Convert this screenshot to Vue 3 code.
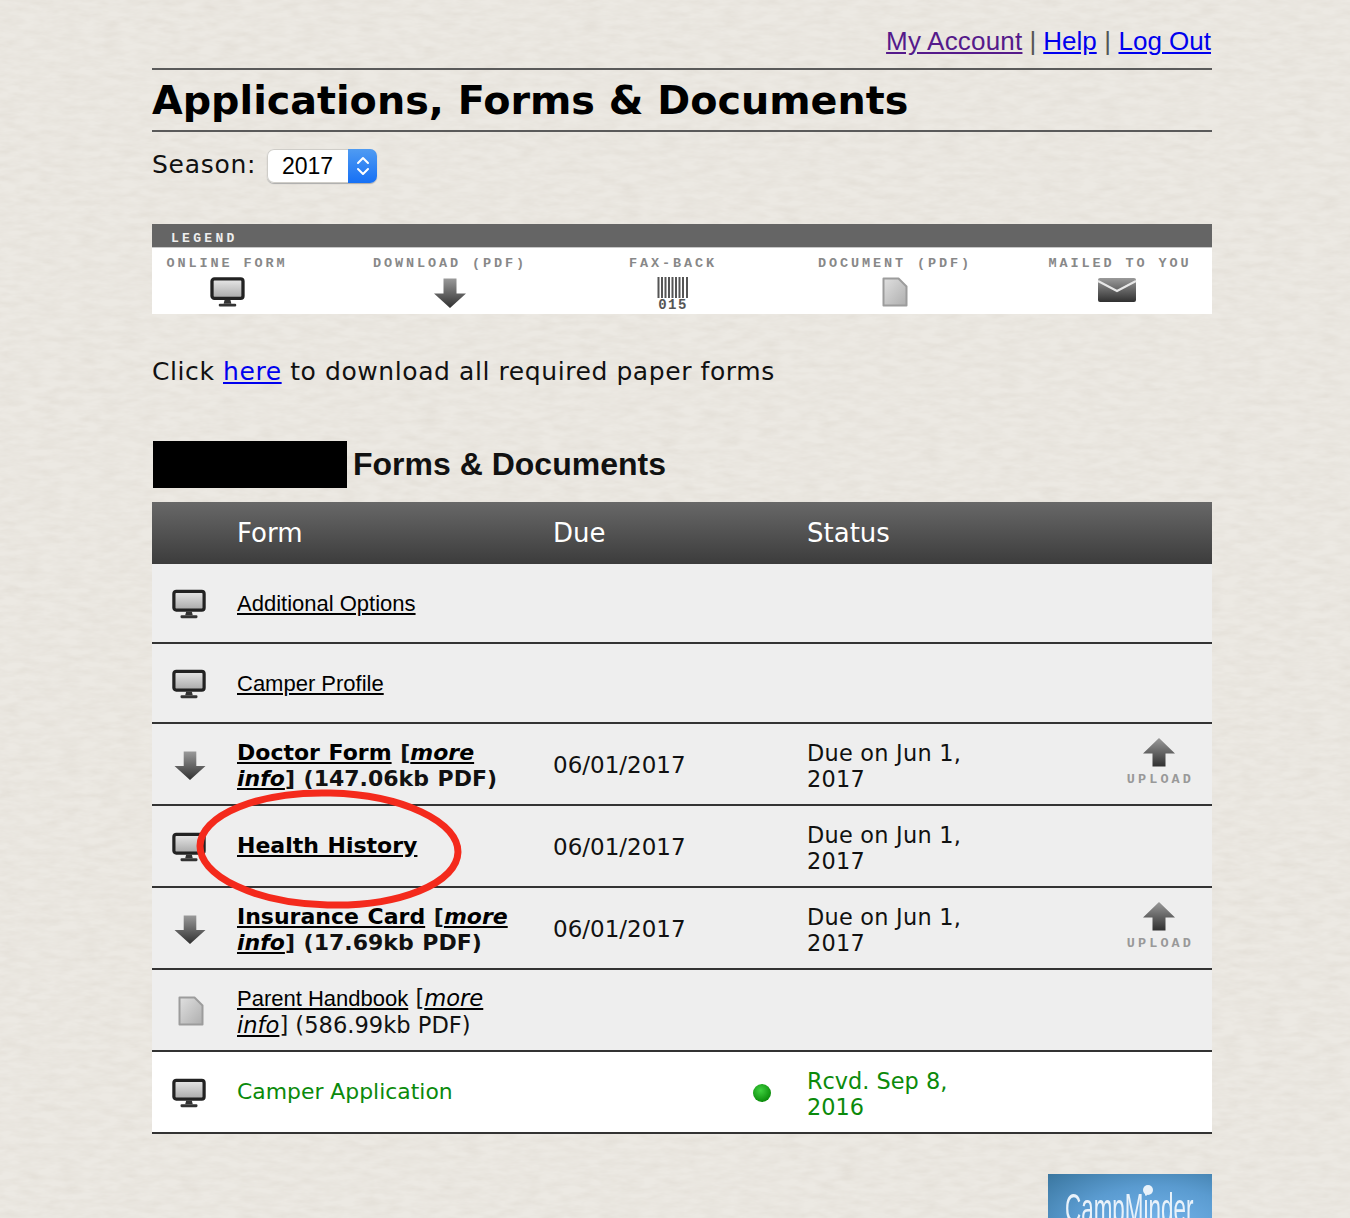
<script setup>
const legend = [
  { label: 'ONLINE FORM', icon: 'i-monitor', w: 35, h: 31 },
  { label: 'DOWNLOAD (PDF)', icon: 'i-down', w: 34, h: 32 },
  { label: 'FAX-BACK', icon: 'i-barcode', w: 32, h: 38 },
  { label: 'DOCUMENT (PDF)', icon: 'i-doc', w: 26, h: 30 },
  { label: 'MAILED TO YOU', icon: 'i-mail', w: 40, h: 26 }
]
const rows = [
  { id: 1, icon: 'i-monitor', name: 'Additional Options', kind: 'plain' },
  { id: 2, icon: 'i-monitor', name: 'Camper Profile', kind: 'plain' },
  { id: 3, icon: 'i-down', name: 'Doctor Form', size: '147.06kb', kind: 'bold', due: '06/01/2017', status: 'Due on Jun 1, 2017', upload: true },
  { id: 4, icon: 'i-monitor', name: 'Health History', kind: 'bold', due: '06/01/2017', status: 'Due on Jun 1, 2017' },
  { id: 5, icon: 'i-down', name: 'Insurance Card', size: '17.69kb', kind: 'bold', due: '06/01/2017', status: 'Due on Jun 1, 2017', upload: true },
  { id: 6, icon: 'i-doc', name: 'Parent Handbook', size: '586.99kb', kind: 'plain' },
  { id: 7, icon: 'i-monitor', name: 'Camper Application', kind: 'done', status: 'Rcvd. Sep 8, 2016' }
]
</script>

<template>
  <div class="page">
    <svg class="paper" width="1350" height="1218" aria-hidden="true">
      <defs>
        <filter id="grain" x="0" y="0" width="100%" height="100%">
          <feTurbulence type="fractalNoise" baseFrequency="0.05 0.16" numOctaves="4" seed="7" />
          <feColorMatrix type="matrix" values="0 0 0 0 0.50  0 0 0 0 0.44  0 0 0 0 0.36  0.18 0.18 0 0 -0.13" />
        </filter>
        <linearGradient id="g-dark" x1="0" y1="0" x2="0" y2="1">
          <stop offset="0" stop-color="#9a9a9a" />
          <stop offset="1" stop-color="#303030" />
        </linearGradient>
        <linearGradient id="g-screen" x1="0" y1="0" x2="0" y2="1">
          <stop offset="0" stop-color="#e8e8e8" />
          <stop offset="1" stop-color="#a8a8a8" />
        </linearGradient>
        <linearGradient id="g-doc" x1="0" y1="0" x2="1" y2="1">
          <stop offset="0" stop-color="#e0e0e0" />
          <stop offset="1" stop-color="#aeaeae" />
        </linearGradient>
        <symbol id="i-monitor" viewBox="0 0 36 32">
          <rect x="2" y="2" width="32" height="20" rx="2.500" fill="url(#g-screen)" stroke="#222" stroke-width="3.400" />
          <path d="M15 23.500h6l1 4h-8z" fill="#333" />
          <rect x="9" y="27.500" width="18" height="3" rx="1.200" fill="#333" />
        </symbol>
        <symbol id="i-down" viewBox="0 0 34 32">
          <path d="M10.500 1.500h13v15h9.500L17 31 1 16.500h9.500z" fill="url(#g-dark)" />
        </symbol>
        <symbol id="i-up" viewBox="0 0 34 32">
          <path d="M17 1l16 15.500h-9.500V29.500h-13V16.500H1z" fill="url(#g-dark)" />
        </symbol>
        <symbol id="i-doc" viewBox="0 0 26 30">
          <path d="M1.500 1.500h15l8 8v19h-23z" fill="url(#g-doc)" stroke="#9c9c9c" stroke-width="2" stroke-linejoin="round" />
        </symbol>
        <symbol id="i-mail" viewBox="0 0 40 26">
          <rect x="1" y="1" width="38" height="24" rx="2" fill="url(#g-dark)" />
          <path d="M1 4l19 10L39 4" fill="none" stroke="#e8e8e8" stroke-width="2" />
        </symbol>
        <symbol id="i-barcode" viewBox="0 0 32 38">
          <path d="M1.500 0v21M5 0v21M8.500 0v21M12 0v21M15.500 0v21M19 0v21M22.500 0v21M26 0v21M30 0v21" stroke="#555" stroke-width="2" />
        </symbol>
        <radialGradient id="g-dot" cx="0.42" cy="0.36" r="0.65">
          <stop offset="0" stop-color="#3fd13f" />
          <stop offset="1" stop-color="#0a8a0a" />
        </radialGradient>
      </defs>
      <rect width="1350" height="1218" filter="url(#grain)" />
    </svg>

    <main class="wrap">
      <nav class="toplinks">
        <a class="visited" href="#">My Account</a><span class="sep first">|</span><a href="#">Help</a><span class="sep">|</span><a href="#">Log Out</a>
      </nav>

      <h1 class="title">Applications, Forms &amp; Documents</h1>

      <div class="season">
        <label class="season-label">Season:</label>
        <div class="select">
          <span class="select-value">2017</span>
          <span class="select-arrows">
            <svg width="14" height="22" viewBox="0 0 14 22" fill="none" stroke="#fff" stroke-width="2" stroke-linecap="round" stroke-linejoin="round">
              <path d="M2 8l5-5 5 5M2 14l5 5 5-5" />
            </svg>
          </span>
        </div>
      </div>

      <section class="legend">
        <div class="legend-head">LEGEND</div>
        <div class="legend-body">
          <div v-for="item in legend" :key="item.label" class="legend-item">
            <span class="legend-label">{{ item.label }}</span>
            <span class="legend-icon" :class="{ 'is-mail': item.icon === 'i-mail' }">
              <svg :width="item.w" :height="item.h"><use :href="'#' + item.icon" /></svg>
              <span v-if="item.icon === 'i-barcode'" class="fax-no">015</span>
            </span>
          </div>
        </div>
      </section>

      <p class="intro">Click <a href="#">here</a> to download all required paper forms</p>

      <h2 class="section-title"><span class="redact"></span><span>Forms &amp; Documents</span></h2>

      <div class="table">
        <div class="thead">
          <span></span><span>Form</span><span>Due</span><span>Status</span><span></span>
        </div>
        <div v-for="r in rows" :key="r.id" class="row" :class="[r.kind, { tall: r.id > 2 }]">
          <span class="cell-icon" :class="{ 'is-doc': r.icon === 'i-doc', 'is-arrow': r.icon === 'i-down' }">
            <svg :width="r.icon === 'i-doc' ? 26 : 34" :height="r.icon === 'i-doc' ? 30 : 31"><use :href="'#' + r.icon" /></svg>
          </span>
          <span class="cell-form" :class="{ sized: r.size }">
            <template v-if="r.size">
              <a href="#" class="name">{{ r.name }}</a> [<a href="#" class="more">more info</a>] ({{ r.size }} PDF)
            </template>
            <span v-else-if="r.kind === 'done'">{{ r.name }}</span>
            <a v-else href="#" class="name">{{ r.name }}</a>
          </span>
          <span class="cell-due">
            <span v-if="r.kind === 'done'" class="dot-wrap"><svg width="20" height="20"><circle cx="10" cy="10" r="9" fill="url(#g-dot)" /></svg></span>
            <template v-else>{{ r.due }}</template>
          </span>
          <span class="cell-status">{{ r.status }}</span>
          <span class="cell-upload">
            <span v-if="r.upload" class="upload">
              <svg width="34" height="32"><use href="#i-up" /></svg>
              <span>UPLOAD</span>
            </span>
          </span>
        </div>
      </div>

      <div class="logo-row">
        <div class="logo"><span class="logo-text">CampMinder</span><span class="logo-dot"></span></div>
      </div>
    </main>

    <svg class="circle" width="280" height="130" viewBox="0 0 280 130" aria-hidden="true">
      <ellipse cx="140" cy="65" rx="129" ry="56" fill="none" stroke="#f42a1c" stroke-width="7" transform="rotate(1.5 140 65)" />
    </svg>
  </div>
</template>

<style>
html, body { margin: 0; height: 1218px; overflow: hidden; background: #ece9e3; }
</style>

<style scoped>
.page {
  position: relative;
  width: 1350px;
  height: 1218px;
  overflow: hidden;
  background: #ece9e3;
  font-family: "DejaVu Sans", Verdana, sans-serif;
  color: #111;
}
.paper { position: absolute; left: 0; top: 0; }
.wrap {
  position: relative;
  width: 1060px;
  margin-left: 152px;
  padding-top: 24px;
}
a { color: #0000ee; text-decoration: underline; }
.toplinks {
  height: 46px;
  box-sizing: border-box;
  border-bottom: 2px solid #5a5a5a;
  text-align: right;
  font: 26px/34px "Liberation Sans", Arial, sans-serif;
  padding-right: 1px;
  color: #555;
}
.toplinks .visited { color: #551a8b; letter-spacing: 0.200px; }
.sep { margin: 0 7.500px; }
.sep.first { margin: 0 7px; }
.title {
  margin: 0;
  height: 62px;
  box-sizing: border-box;
  border-bottom: 2px solid #5a5a5a;
  font-size: 39.700px;
  line-height: 60px;
  font-weight: 700;
  color: #000;
  white-space: nowrap;
}
.season {
  display: flex;
  align-items: center;
  gap: 11px;
  height: 34px;
  margin-top: 17px;
  font-size: 25px;
  letter-spacing: 0.700px;
}
.season-label { line-height: 32px; padding-bottom: 2px; }
.select {
  display: flex;
  width: 110px;
  height: 34px;
  box-sizing: border-box;
  border-radius: 7px;
  overflow: hidden;
  background: #fff;
  box-shadow: 0 0 0 1px #cfcdc8 inset, 0 1px 1px #aaa;
}
.select-value { flex: 1; text-align: center; font: 23px/34px "Liberation Sans", Arial, sans-serif; letter-spacing: 0; color: #000; }
.select-arrows {
  width: 29px;
  display: flex;
  align-items: center;
  justify-content: center;
  background: linear-gradient(#4f9bf2, #1670f5);
}
.legend { margin-top: 41px; height: 90px; background: #fff; }
.legend-head {
  height: 24px;
  box-sizing: border-box;
  background: #656565;
  border-bottom: 1px solid #c8c8c8;
  padding-left: 19px;
  font: 700 13px/29px "Liberation Mono", monospace;
  letter-spacing: 3.300px;
  color: #eee;
}
.legend-body {
  display: grid;
  grid-template-columns: 150px 296px 150px 294px 156px;
}
.legend-item { display: flex; flex-direction: column; align-items: center; }
.legend-label {
  margin-top: 7px;
  font: 700 13.500px/18px "Liberation Mono", monospace;
  letter-spacing: 2.900px;
  color: #888;
  white-space: nowrap;
}
.legend-icon { position: relative; display: flex; justify-content: center; height: 40px; margin-top: 4px; }
.legend-icon.is-mail { transform: translateX(-3px); }
.fax-no {
  position: absolute;
  left: 0;
  right: 0;
  top: 20px;
  text-align: center;
  font: 700 14px/16px "Liberation Mono", monospace;
  letter-spacing: 1.500px;
  color: #555;
}
.intro {
  margin: 41px 0 0;
  height: 34px;
  font-size: 25px;
  line-height: 34px;
  letter-spacing: 0.580px;
}
.section-title {
  display: flex;
  align-items: center;
  gap: 6px;
  height: 47px;
  margin: 52px 0 0 1px;
  font: 700 32px/45px "Liberation Sans", Arial, sans-serif;
  color: #111;
}
.redact { width: 194px; height: 47px; background: #000; }
.table { margin-top: 14px; }
.thead, .row {
  display: grid;
  grid-template-columns: 85px 316px 254px 170px 1fr;
}
.thead {
  height: 62px;
  align-items: center;
  background: linear-gradient(#686868, #3c3c3c);
  color: #fff;
  font-size: 26px;
}
.row {
  height: 80px;
  box-sizing: border-box;
  align-items: center;
  background: #eee;
  border-bottom: 2px solid #333;
  font-size: 23px;
  line-height: 26px;
  color: #111;
}
.row.tall { height: 82px; }
.row.done { background: #fff; color: #0b8a0b; }
.row a { color: #000; }
.cell-form { padding-right: 36px; font-size: 22px; }
.cell-form.sized { padding-top: 3px; }
.row.done .cell-form { font-size: 21.900px; }
.row.bold .cell-form { font-weight: 700; word-spacing: 1px; }
.row.plain .cell-form { font-size: 22.600px; }
.row.plain .name { font-family: "Liberation Sans", Arial, sans-serif; font-size: 22px; }
.more { font-style: italic; }
.cell-due { padding-top: 2px; }
.cell-status { font-size: 22.400px; padding-top: 3px; }
.row.bold .cell-status { letter-spacing: 0.250px; }
.cell-icon { display: flex; padding-left: 20px; padding-top: 2px; }
.cell-icon svg { display: block; }
.cell-icon.is-doc { padding-left: 26px; }
.cell-icon.is-arrow { padding-left: 21px; }
.dot-wrap { display: block; padding-left: 199px; line-height: 0; }
.cell-upload { display: flex; justify-content: flex-end; padding-right: 18px; }
.upload { display: flex; flex-direction: column; align-items: center; }
.upload svg { margin: -2px 3px 2px 0; }
.upload span {
  font: 700 13.500px/18px "Liberation Mono", monospace;
  letter-spacing: 3.100px;
  color: #999;
}
.logo-row { display: flex; justify-content: flex-end; margin-top: 40px; }
.logo {
  position: relative;
  width: 164px;
  height: 60px;
  overflow: hidden;
  background: radial-gradient(ellipse at 65% 90%, #76b6ee 0%, #5a9bd0 55%, #3a769f 100%);
}
.logo-text {
  position: absolute;
  left: 17px;
  top: 10px;
  font: 400 42px/50px "Liberation Sans", Arial, sans-serif;
  color: #e9f2fa;
  white-space: nowrap;
  transform: scaleX(0.534);
  transform-origin: left top;
}
.logo-dot {
  position: absolute;
  left: 95px;
  top: 11px;
  width: 10px;
  height: 10px;
  border-radius: 50%;
  background: #e9f2fa;
}
.circle { position: absolute; left: 189px; top: 784px; }
</style>
